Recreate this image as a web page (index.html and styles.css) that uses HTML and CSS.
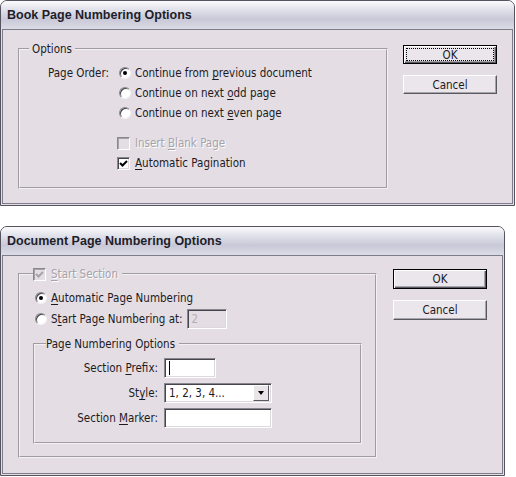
FILE: index.html
```html
<!DOCTYPE html>
<html lang="en">
<head>
    <meta charset="UTF-8">
    <meta name="viewport" content="width=device-width, initial-scale=1.0">
    <title>Page Numbering Options</title>
    <link rel="stylesheet" href="styles.css">
</head>
<body>
    <div class="dialog book">
        <div class="titlebar">Book Page Numbering Options</div>
        <div class="body">
            <fieldset class="group options">
                <legend>Options</legend>
                <div class="order">
                    <span class="order-label">Page Order:</span>
                    <div class="choices">
                        <div class="opt"><span class="radio on"></span><span>Continue from <u>p</u>revious document</span></div>
                        <div class="opt"><span class="radio"></span><span>Continue on next <u>o</u>dd page</span></div>
                        <div class="opt"><span class="radio"></span><span>Continue on next <u>e</u>ven page</span></div>
                    </div>
                </div>
                <div class="checks">
                    <div class="opt disabled"><span class="check"></span><span>Insert <u>B</u>lank Page</span></div>
                    <div class="opt"><span class="check"><svg width="11" height="11" viewBox="0 0 11 11"><path d="M2 5 L4.5 7.5 L9 3" fill="none" stroke="#000" stroke-width="2"/></svg></span><span><u>A</u>utomatic Pagination</span></div>
                </div>
            </fieldset>
            <div class="buttons">
                <button class="btn default focus">OK</button>
                <button class="btn">Cancel</button>
            </div>
        </div>
    </div>

    <div class="dialog document">
        <div class="titlebar">Document Page Numbering Options</div>
        <div class="body">
            <fieldset class="group section">
                <legend class="disabled"><span class="check"><svg width="11" height="11" viewBox="0 0 11 11"><path d="M2 5 L4.5 7.5 L9 3" fill="none" stroke="#a6a2aa" stroke-width="2"/></svg></span><span><u>S</u>tart Section</span></legend>
                <div class="opt"><span class="radio on"></span><span><u>A</u>utomatic Page Numbering</span></div>
                <div class="opt tall"><span class="radio"></span><span>S<u>t</u>art Page Numbering at:</span><span class="field start-at">2</span></div>
                <fieldset class="group numbering">
                    <legend>Page Numbering Options</legend>
                    <div class="form">
                        <span class="form-label">Section <u>P</u>refix:</span>
                        <span class="field prefix"><span class="caret"></span></span>
                        <span class="form-label">St<u>y</u>le:</span>
                        <span class="field select"><span>1, 2, 3, 4...</span><span class="drop"></span></span>
                        <span class="form-label">Section <u>M</u>arker:</span>
                        <span class="field wide"></span>
                    </div>
                </fieldset>
            </fieldset>
            <div class="buttons">
                <button class="btn default">OK</button>
                <button class="btn">Cancel</button>
            </div>
        </div>
    </div>
</body>
</html>
```

FILE: styles.css
```css
*{
    box-sizing: border-box;
}
body{
    margin: 0;
    background-color: #fff;
    font-family: "DejaVu Sans Condensed", "DejaVu Sans", sans-serif;
    font-size: 11.5px;
    color: #1c1a1e;
}
u{
    text-decoration-thickness: 1px;
    text-underline-offset: 2px;
}

/* window frame */
.dialog{
    border: 1px solid #55535f;
    border-radius: 7px 7px 0 0;
    background-color: #e4dee4;
    overflow: hidden;
}
.book{
    width: 515px;
    height: 206px;
}
.document{
    width: 505px;
    height: 250px;
    margin-top: 20px;
}
.titlebar{
    height: 28px;
    padding-left: 6px;
    line-height: 29px;
    font-family: "Liberation Sans", Arial, sans-serif;
    font-size: 12.5px;
    font-weight: bold;
    color: #1e1e2a;
    background: linear-gradient(#fbfbfd, #e6e6ee 25%, #c8c8d8 65%, #dcdce6);
}
.body{
    display: flex;
    align-items: flex-start;
    gap: 15px;
    margin: 0 1px 1px;
    border: 1px solid #7e7c8a;
    padding-left: 15px;
}
.book .body{
    height: 175px;
    padding-top: 12px;
}
.document .body{
    height: 219px;
    padding-top: 11px;
    gap: 16px;
}

/* group boxes */
.group{
    margin: 0;
    border: 2px groove #f4f0f4;
}
.group legend{
    height: 14px;
    line-height: 14px;
    padding: 0 3px;
}
.options{
    width: 370px;
    height: 147px;
    padding: 7px 9px 0;
}
.section{
    width: 359px;
    height: 191px;
    padding: 7px 13px 12px;
}
.section legend{
    display: flex;
    align-items: center;
    gap: 5px;
    padding: 0 4px 0 0;
}
.numbering{
    margin-top: 7px;
    padding: 7px 0 14px;
}
.numbering legend{
    margin-left: 11px;
}

/* options rows */
.order{
    display: flex;
    margin-left: 19px;
}
.order-label{
    width: 71px;
    line-height: 20px;
}
.opt{
    display: flex;
    align-items: center;
    height: 20px;
}
.opt.tall{
    height: 22px;
}
.checks{
    margin: 10px 0 0 89px;
}
.disabled{
    color: #a6a2aa;
    text-shadow: 1px 1px 0 #fff;
}
.section .opt .radio{
    margin-left: 2px;
}

/* radio and check */
.radio{
    position: relative;
    width: 12px;
    height: 12px;
    margin-right: 4px;
    border-radius: 50%;
    background-color: #fff;
    border: 1px solid;
    border-color: #8a8690 #f4f2f4 #f4f2f4 #8a8690;
    box-shadow: inset 1px 1px 0 #46444c;
}
.radio.on::after{
    content: "";
    position: absolute;
    left: 3px;
    top: 3px;
    width: 4px;
    height: 4px;
    border-radius: 50%;
    background-color: #000;
}
.check{
    display: flex;
    align-items: center;
    justify-content: center;
    width: 13px;
    height: 13px;
    margin-right: 5px;
    background-color: #fff;
    border: 1px solid;
    border-color: #8a8690 #fff #fff #8a8690;
    box-shadow: inset 1px 1px 0 #46444c, inset -1px -1px 0 #dcd8dc;
}
.disabled .check{
    background-color: #e4dee4;
    box-shadow: inset 1px 1px 0 #a6a2aa;
}
.section legend .check{
    margin-right: 0;
}
.options .checks .check{
    margin-left: -1px;
}

/* text fields */
.field{
    position: relative;
    display: flex;
    align-items: center;
    height: 20px;
    padding-left: 4px;
    background-color: #fff;
    border: 1px solid;
    border-color: #8a8690 #fff #fff #8a8690;
    box-shadow: inset 1px 1px 0 #46444c, inset -1px -1px 0 #dcd8dc;
}
.start-at{
    width: 40px;
    margin-left: 4px;
    background-color: #e4dee4;
    color: #b4b0b6;
}
.form{
    display: grid;
    grid-template-columns: 123px 108px;
    column-gap: 6px;
    row-gap: 5px;
}
.form-label{
    text-align: right;
    line-height: 20px;
}
.prefix{
    width: 52px;
}
.caret{
    width: 1px;
    height: 14px;
    background-color: #000;
}
.select{
    justify-content: space-between;
    padding-right: 2px;
}
.drop{
    position: relative;
    width: 16px;
    height: 16px;
    background-color: #e8e4e8;
    border: 1px solid;
    border-color: #fff #5a5860 #5a5860 #fff;
}
.drop::after{
    content: "";
    position: absolute;
    left: 4px;
    top: 5px;
    border-left: 3px solid transparent;
    border-right: 3px solid transparent;
    border-top: 4px solid #000;
}

/* buttons */
.buttons{
    display: flex;
    flex-direction: column;
    gap: 11px;
}
.book .buttons{
    margin-top: 3px;
}
.document .buttons{
    margin-top: 2px;
}
.btn{
    width: 94px;
    height: 19px;
    padding: 0;
    font-family: inherit;
    font-size: 11.5px;
    color: #1c1a1e;
    background-color: #ebe6eb;
    border: 1px solid;
    border-color: #fff #5a5860 #5a5860 #fff;
    box-shadow: inset -1px -1px 0 #a8a4ac;
}
.document .btn{
    height: 20px;
}
.btn.default{
    border: 1px solid #000;
    box-shadow: inset 1px 1px 0 #fff, inset -1px -1px 0 #5a5860, inset -2px -2px 0 #a8a4ac;
}
.btn.focus{
    outline: 1px dotted #000;
    outline-offset: -4px;
}
```
